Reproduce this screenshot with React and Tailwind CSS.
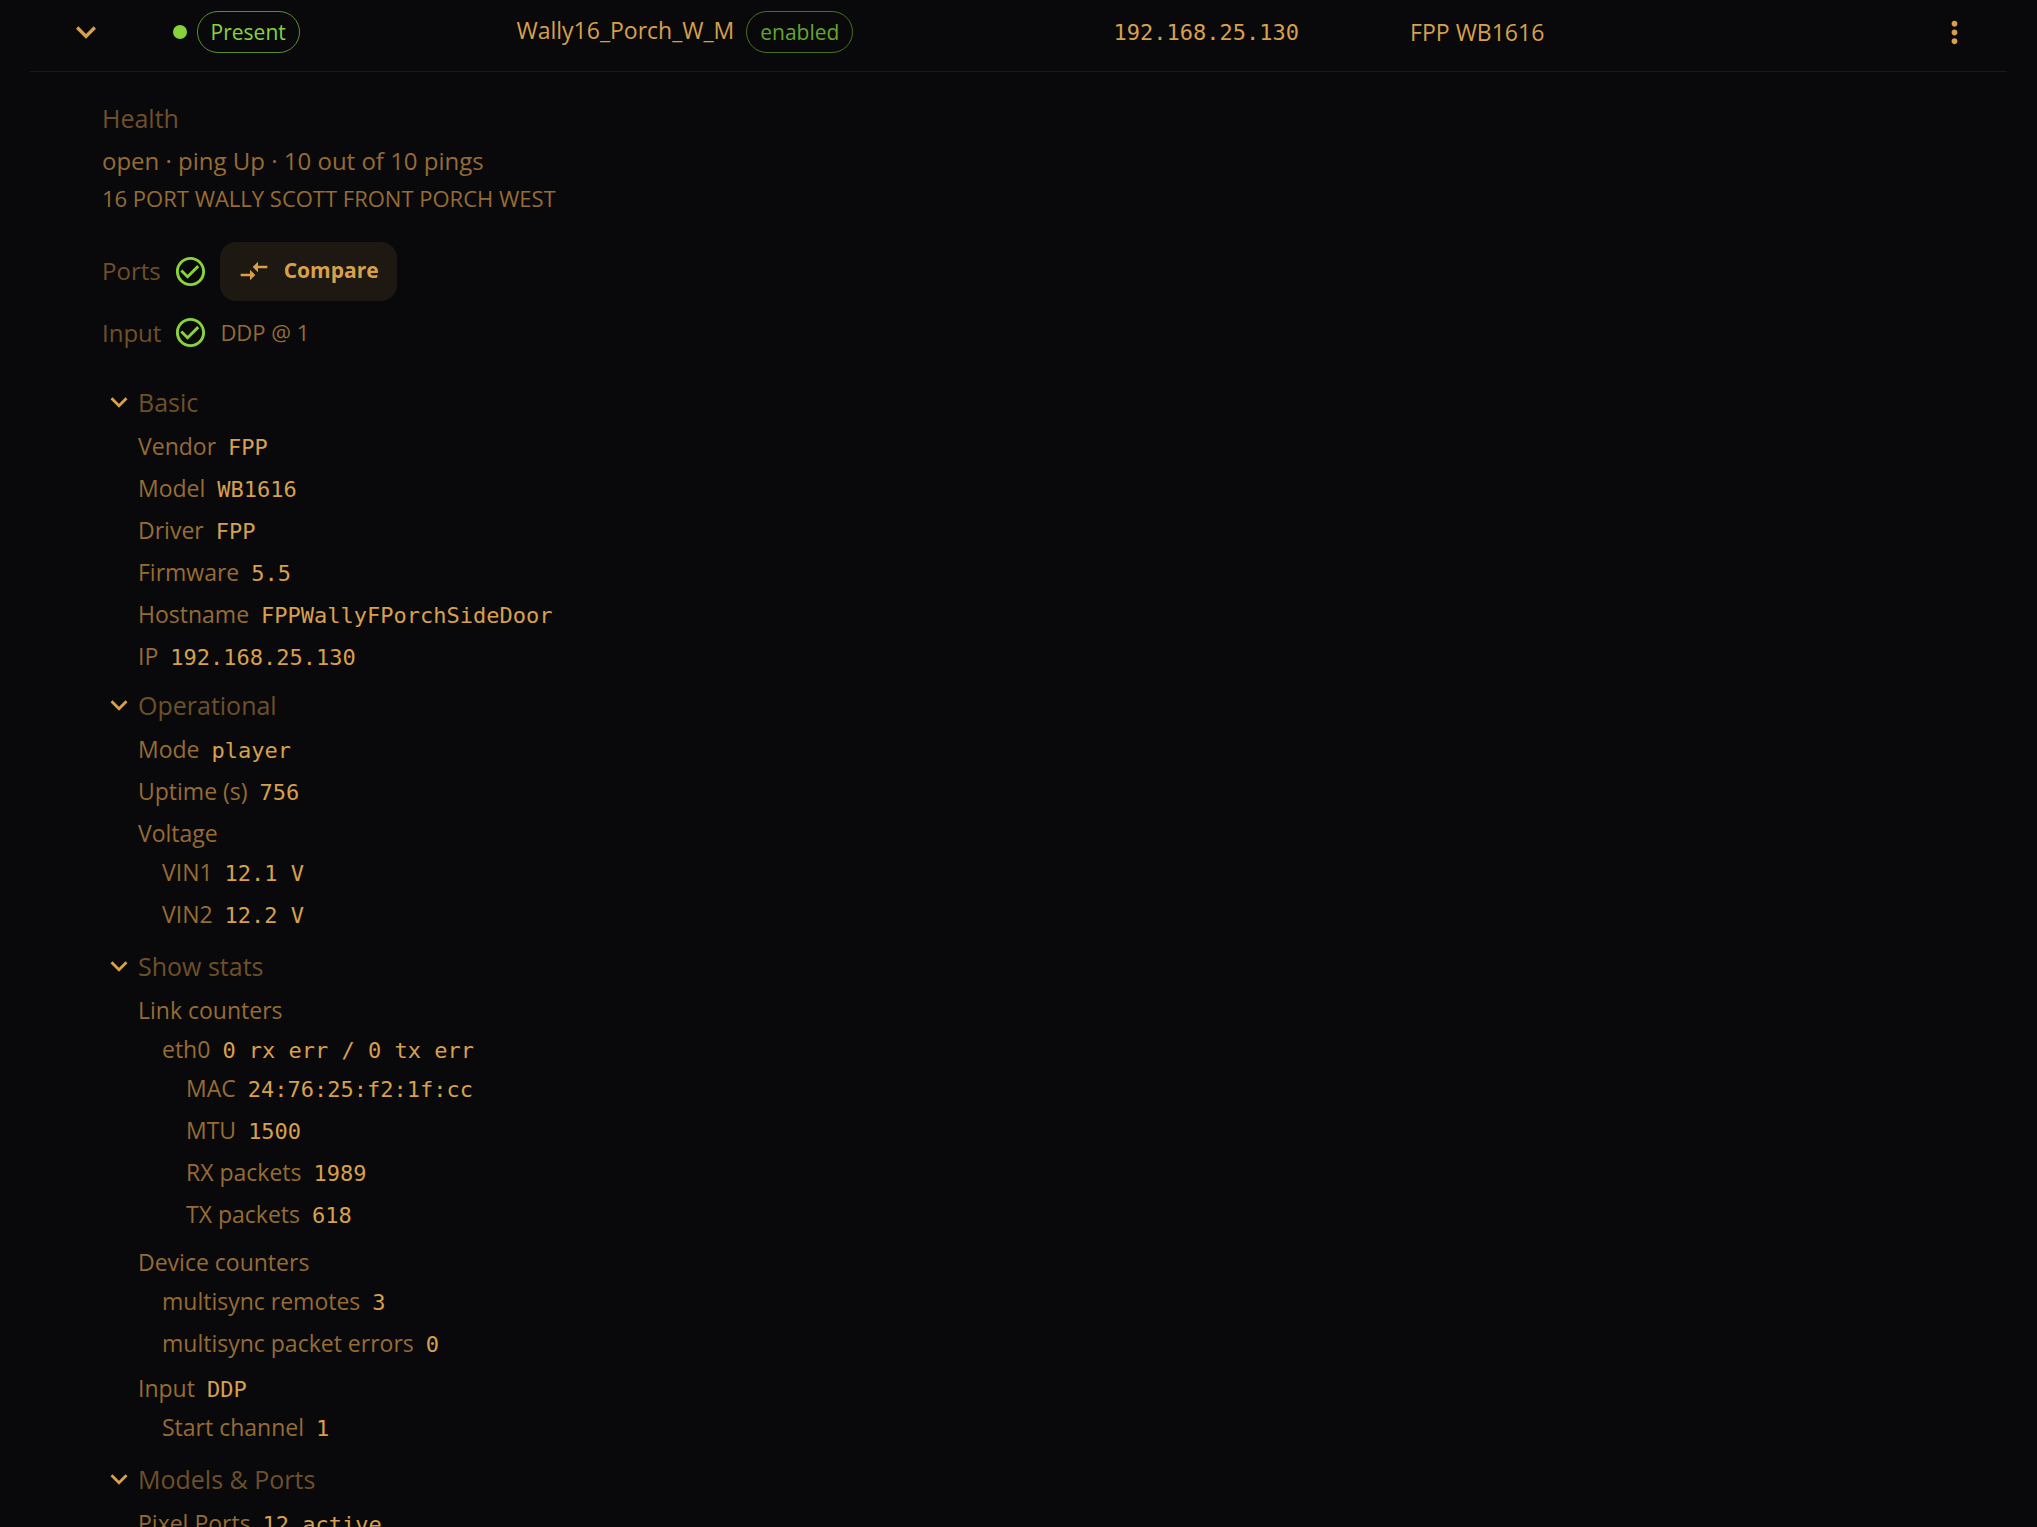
import React, { useState } from "react";
import {
    MdCheckCircleOutline,
    MdCompareArrows,
    MdExpandMore,
    MdMoreVert,
} from "react-icons/md";
import clsx from "clsx";

const controller = {
    status: "Present",
    name: "Wally16_Porch_W_M",
    state: "enabled",
    ip: "192.168.25.130",
    model: "FPP WB1616",
    health: "open · ping Up · 10 out of 10 pings",
    description: "16 PORT WALLY SCOTT FRONT PORCH WEST",
    input: "DDP @ 1",
};

const sections = [
    {
        title: "Basic",
        rows: [
            { label: "Vendor", value: "FPP" },
            { label: "Model", value: "WB1616" },
            { label: "Driver", value: "FPP" },
            { label: "Firmware", value: "5.5" },
            { label: "Hostname", value: "FPPWallyFPorchSideDoor" },
            { label: "IP", value: "192.168.25.130" },
        ],
    },
    {
        title: "Operational",
        rows: [
            { label: "Mode", value: "player" },
            { label: "Uptime (s)", value: "756" },
            {
                label: "Voltage",
                rows: [
                    { label: "VIN1", value: "12.1 V" },
                    { label: "VIN2", value: "12.2 V" },
                ],
            },
        ],
    },
    {
        title: "Show stats",
        rows: [
            {
                label: "Link counters",
                rows: [
                    {
                        label: "eth0",
                        value: "0 rx err / 0 tx err",
                        rows: [
                            { label: "MAC", value: "24:76:25:f2:1f:cc" },
                            { label: "MTU", value: "1500" },
                            { label: "RX packets", value: "1989" },
                            { label: "TX packets", value: "618" },
                        ],
                    },
                ],
            },
            {
                label: "Device counters",
                rows: [
                    { label: "multisync remotes", value: "3" },
                    { label: "multisync packet errors", value: "0" },
                ],
            },
            {
                label: "Input",
                value: "DDP",
                rows: [{ label: "Start channel", value: "1" }],
            },
        ],
    },
    {
        title: "Models & Ports",
        rows: [{ label: "Pixel Ports", value: "12 active" }],
    },
];

function Pill({ className, children }) {
    return (
        <span
            className={clsx(
                "inline-flex h-[42px] items-center rounded-full border px-[13px] text-[21px]",
                className
            )}
        >
            {children}
        </span>
    );
}

function DetailRows({ rows, nested }) {
    return (
        <ul
            className={clsx(
                "flex flex-col gap-1.5",
                nested && "mt-[3px] pb-[3px] pl-6"
            )}
        >
            {rows.map((row) => (
                <li key={row.label}>
                    <div className="flex h-9 items-baseline gap-3">
                        <span className="text-[23px] leading-9 text-[#966c34]">
                            {row.label}
                        </span>
                        {row.value && (
                            <span className="font-['DejaVu_Sans_Mono',monospace] text-[22px] leading-9 text-[#d8a04b]">
                                {row.value}
                            </span>
                        )}
                    </div>
                    {row.rows && <DetailRows rows={row.rows} nested />}
                </li>
            ))}
        </ul>
    );
}

function Section({ title, rows }) {
    const [open, setOpen] = useState(true);

    return (
        <section>
            <button
                type="button"
                aria-expanded={open}
                onClick={() => setOpen(!open)}
                className="flex h-9 items-center gap-0.5 text-[25px] leading-9 text-[#6d502a]"
            >
                <MdExpandMore
                    className={clsx("size-[34px] text-[#d8a04b]", !open && "-rotate-90")}
                />
                {title}
            </button>
            {open && (
                <div className="mt-2 pl-9">
                    <DetailRows rows={rows} />
                </div>
            )}
        </section>
    );
}

export default function App() {
    const [open, setOpen] = useState(true);

    return (
        <div className="h-screen overflow-hidden bg-[#09090b] px-[30px] font-['Open_Sans',sans-serif] text-[#d8a04b]">
            <table className="w-full table-fixed border-collapse">
                <colgroup>
                    <col className="w-[6%]" />
                    <col className="w-[18%]" />
                    <col className="w-[30%]" />
                    <col className="w-[15%]" />
                    <col className="w-[25%]" />
                    <col className="w-[6%]" />
                </colgroup>
                <tbody>
                    <tr className="h-[71px] border-b border-[#1d1912] text-[23px]">
                        <td className="pb-1.5 pl-9">
                            <button
                                type="button"
                                aria-label="Toggle details"
                                aria-expanded={open}
                                onClick={() => setOpen(!open)}
                                className="flex"
                            >
                                <MdExpandMore className="size-10" />
                            </button>
                        </td>
                        <td className="pb-1.5 pl-6">
                            <div className="flex items-center gap-2.5">
                                <span className="size-[14px] rounded-full bg-[#88d33b]" />
                                <Pill className="border-[#5b8f2b] text-[#88d33b]">
                                    {controller.status}
                                </Pill>
                            </div>
                        </td>
                        <td className="pb-1.5 pl-3">
                            <div className="flex items-center gap-3">
                                <span className="pb-1">{controller.name}</span>
                                <Pill className="border-[#47711f] text-[#66a52e]">
                                    {controller.state}
                                </Pill>
                            </div>
                        </td>
                        <td className="pb-1.5 pl-4 font-['DejaVu_Sans_Mono',monospace] text-[22px]">
                            {controller.ip}
                        </td>
                        <td className="pb-1.5 pl-4">{controller.model}</td>
                        <td className="pb-1.5">
                            <button
                                type="button"
                                aria-label="More actions"
                                className="mr-[35px] ml-auto flex"
                            >
                                <MdMoreVert className="size-[35px]" />
                            </button>
                        </td>
                    </tr>
                    {open && (
                        <tr>
                            <td colSpan={6} className="pt-7 pl-[72px]">
                                <h2 className="text-[25px] leading-9 text-[#6d502a]">
                                    Health
                                </h2>
                                <p className="mt-[7px] text-[24px] leading-9 text-[#966c34]">
                                    {controller.health}
                                </p>
                                <p className="mt-[3px] text-[22px] leading-8 text-[#966c34]">
                                    {controller.description}
                                </p>
                                <div className="mt-7 flex h-[59px] items-center gap-3">
                                    <h2 className="text-[24px] text-[#6d502a]">Ports</h2>
                                    <MdCheckCircleOutline className="size-[35px] text-[#88d33b]" />
                                    <button
                                        type="button"
                                        className="flex h-[59px] items-center gap-3.5 rounded-2xl bg-[#1d1812] px-[18px] text-[21px] font-bold"
                                    >
                                        <MdCompareArrows className="size-8" />
                                        Compare
                                    </button>
                                </div>
                                <div className="mt-3.5 flex h-9 items-center gap-3">
                                    <h2 className="text-[24px] text-[#6d502a]">Input</h2>
                                    <MdCheckCircleOutline className="size-[35px] text-[#88d33b]" />
                                    <span className="text-[22px] text-[#966c34]">
                                        {controller.input}
                                    </span>
                                </div>
                                <div className="mt-[33px] flex flex-col gap-[13px]">
                                    {sections.map((section) => (
                                        <Section key={section.title} {...section} />
                                    ))}
                                </div>
                            </td>
                        </tr>
                    )}
                </tbody>
            </table>
        </div>
    );
}
